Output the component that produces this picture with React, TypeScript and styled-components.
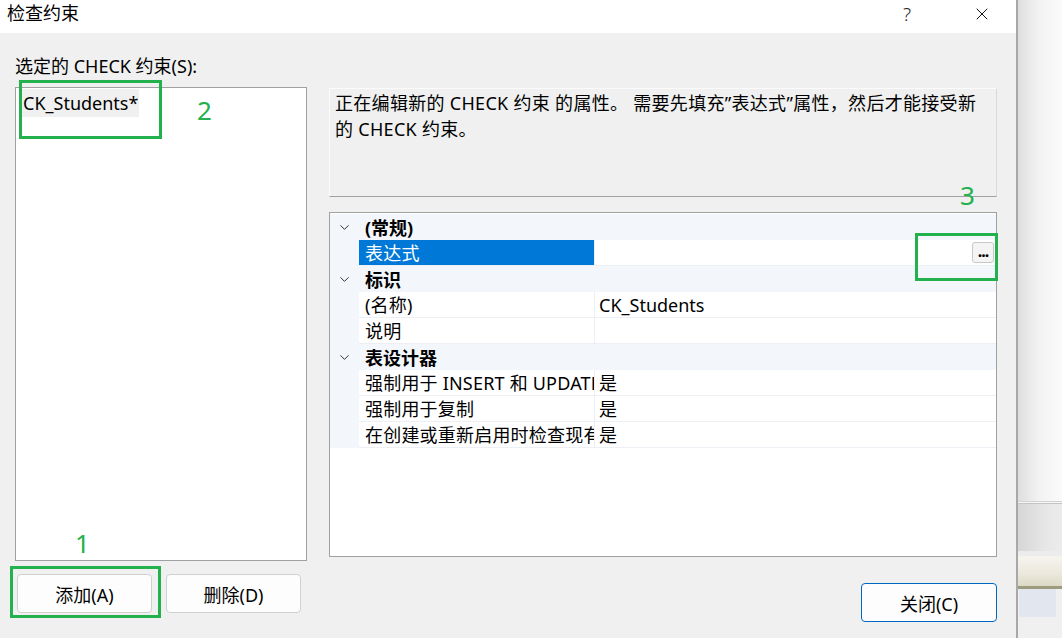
import React from "react"
import styled, { createGlobalStyle } from "styled-components"
import { ChevronDown, X } from "lucide-react"

const GlobalStyle = createGlobalStyle`
  html, body {
    margin: 0;
    padding: 0;
    background: #f0f0f0;
  }
  body {
    font-family: "Noto Sans", "Noto Sans CJK SC", sans-serif;
    color: #000;
  }
`

const Screen = styled.div`
  position: relative;
  display: flex;
  width: 1062px;
  height: 638px;
  overflow: hidden;
  font-size: 18px;
`

const Dialog = styled.div`
  width: 1016px;
  display: flex;
  flex-direction: column;
  background: #f0f0f0;
  border-right: 2px solid #a8a8a8;
`

const TitleBar = styled.div`
  height: 33px;
  display: flex;
  align-items: center;
  background: #ffffff;
  padding-left: 7px;
`

const Title = styled.div`
  font-size: 18px;
  line-height: 24px;
  margin-top: -8px;
`

const TitleButtons = styled.div`
  margin-left: auto;
  display: flex;
  align-items: center;
  margin-top: -6px;
`

const HelpButton = styled.div`
  width: 14px;
  font-size: 19px;
  font-weight: 300;
  color: #222;
  line-height: 24px;
  margin-right: 55px;
`

const CloseIcon = styled.div`
  display: flex;
  margin-right: 24px;
  color: #111;
`

const Body = styled.div`
  flex: 1;
  display: flex;
  gap: 22px;
  padding: 0 19px 0 15px;
`

const LeftCol = styled.div`
  width: 292px;
  display: flex;
  flex-direction: column;
  padding-top: 22px;
`

const FieldLabel = styled.div`
  line-height: 24px;
  height: 24px;
  margin-top: -1px;
  margin-bottom: 1px;
`

const ListBox = styled.div`
  margin-top: 8px;
  height: 474px;
  box-sizing: border-box;
  background: #ffffff;
  border: 1px solid #a0a0a0;
  padding: 0 6px;
`

const ListItem = styled.div`
  display: inline-block;
  margin-top: 1px;
  padding: 0 1px;
  height: 28px;
  line-height: 28px;
  background: ${p => (p.$selected ? "#f0f0f0" : "transparent")};
`

const ButtonRow = styled.div`
  display: flex;
  gap: 14px;
  margin-top: 13px;
  padding-left: 2px;
`

const Button = styled.div`
  width: ${p => p.$w || 135}px;
  height: 39px;
  box-sizing: border-box;
  display: flex;
  align-items: center;
  justify-content: center;
  background: #fdfdfd;
  border: 1px solid ${p => (p.$primary ? "#0067c0" : "#d0d0d0")};
  border-radius: 4px;
  font-size: 18px;
`

const RightCol = styled.div`
  width: 668px;
  display: flex;
  flex-direction: column;
  padding-top: 55px;
`

const Description = styled.div`
  height: 109px;
  box-sizing: border-box;
  border: 1px solid;
  border-color: #fbfbfb #dadada #a0a0a0 #fbfbfb;
  padding: 1px 5px;
  line-height: 26px;
  white-space: nowrap;
  letter-spacing: 0.3px;
`

const PropGrid = styled.div`
  margin-top: 15px;
  height: 345px;
  box-sizing: border-box;
  border: 1px solid #a0a0a0;
  background: #ffffff;
  padding-top: 1px;
  display: flex;
  flex-direction: column;
`

const Row = styled.div`
  display: flex;
  height: 26px;
  box-sizing: border-box;
  background: ${p => (p.$category ? "#f3f6fb" : "#ffffff")};
`

const Gutter = styled.div`
  width: 29px;
  flex: none;
  display: flex;
  align-items: center;
  justify-content: center;
  background: #f3f6fb;
  color: #333;
`

const CategoryText = styled.div`
  font-weight: 700;
  line-height: 24px;
  padding: 2px 0 0 6px;
`

const NameCell = styled.div`
  width: 236px;
  flex: none;
  box-sizing: border-box;
  padding: 2px 0 0 6px;
  line-height: 23px;
  white-space: nowrap;
  overflow: hidden;
  letter-spacing: 0.2px;
  border-right: 1px solid #eceff4;
  border-bottom: 1px solid #eceff4;
  background: ${p => (p.$selected ? "#0078d7" : "#ffffff")};
  color: ${p => (p.$selected ? "#ffffff" : "#000")};
`

const ValueCell = styled.div`
  flex: 1;
  display: flex;
  align-items: center;
  padding: 2px 0 0 4px;
  line-height: 23px;
  border-bottom: 1px solid #eceff4;
`

const EllipsisButton = styled.div`
  margin-left: auto;
  margin-right: 2px;
  margin-top: -2px;
  width: 22px;
  height: 21px;
  box-sizing: border-box;
  border: 1px solid #c8c8c8;
  border-radius: 3px;
  background: #f4f4f4;
  font-size: 16px;
  font-weight: 700;
  line-height: 16px;
  text-align: center;
  letter-spacing: -1px;
`

const Footer = styled.div`
  display: flex;
  justify-content: flex-end;
  margin-top: 26px;
`

const SideStrip = styled.div`
  flex: 1;
  display: flex;
  flex-direction: column;
`

const Band = styled.div`
  height: ${p => p.$h}px;
  flex: ${p => (p.$grow ? 1 : "none")};
  background: ${p => p.$bg};
`

const BlueTab = styled.div`
  height: 28px;
  display: flex;
  background: #f0f0f0;
  & > div {
    width: 37px;
    background: #e2e6ee;
    margin-left: 1px;
  }
`

const Mark = styled.div`
  position: absolute;
  box-sizing: border-box;
  border: 3px solid #22b14c;
  left: ${p => p.$x}px;
  top: ${p => p.$y}px;
  width: ${p => p.$w}px;
  height: ${p => p.$h}px;
`

const MarkNumber = styled.div`
  position: absolute;
  left: ${p => p.$x}px;
  top: ${p => p.$y}px;
  color: #22b14c;
  font-family: "Noto Sans", sans-serif;
  font-size: 26px;
  line-height: 30px;
`

const categories = [
  {
    title: "(常规)",
    rows: [{ name: "表达式", value: "", selected: true, ellipsis: true }],
  },
  {
    title: "标识",
    rows: [
      { name: "(名称)", value: "CK_Students" },
      { name: "说明", value: "" },
    ],
  },
  {
    title: "表设计器",
    rows: [
      { name: "强制用于 INSERT 和 UPDATE", value: "是" },
      { name: "强制用于复制", value: "是" },
      { name: "在创建或重新启用时检查现有数据", value: "是" },
    ],
  },
]

const App = () => {
  return (
    <Screen>
      <GlobalStyle />
      <Dialog>
        <TitleBar>
          <Title>检查约束</Title>
          <TitleButtons>
            <HelpButton>?</HelpButton>
            <CloseIcon>
              <X size={20} strokeWidth={1.2} />
            </CloseIcon>
          </TitleButtons>
        </TitleBar>
        <Body>
          <LeftCol>
            <FieldLabel>选定的 CHECK 约束(S):</FieldLabel>
            <ListBox>
              <ListItem $selected>CK_Students*</ListItem>
            </ListBox>
            <ButtonRow>
              <Button>添加(A)</Button>
              <Button>删除(D)</Button>
            </ButtonRow>
          </LeftCol>
          <RightCol>
            <Description>
              正在编辑新的 CHECK 约束 的属性。 需要先填充”表达式”属性，然后才能接受新
              <br />
              的 CHECK 约束。
            </Description>
            <PropGrid>
              {categories.map(cat => (
                <React.Fragment key={cat.title}>
                  <Row $category>
                    <Gutter>
                      <ChevronDown size={15} strokeWidth={1.6} />
                    </Gutter>
                    <CategoryText>{cat.title}</CategoryText>
                  </Row>
                  {cat.rows.map(r => (
                    <Row key={r.name}>
                      <Gutter />
                      <NameCell $selected={r.selected}>{r.name}</NameCell>
                      <ValueCell>
                        {r.value}
                        {r.ellipsis && <EllipsisButton>...</EllipsisButton>}
                      </ValueCell>
                    </Row>
                  ))}
                </React.Fragment>
              ))}
            </PropGrid>
            <Footer>
              <Button $primary $w={136}>关闭(C)</Button>
            </Footer>
          </RightCol>
        </Body>
      </Dialog>
      <SideStrip>
        <Band $grow $bg="linear-gradient(90deg, #dedede 0%, #f2f2f2 45%, #fbfbfb 100%)" />
        <Band $h={1} $bg="#d2d2d2" />
        <Band $h={1} $bg="#f6f6f6" />
        <Band $h={1} $bg="#c4c4c4" />
        <Band $h={47} $bg="linear-gradient(90deg, #d6d6d6 0%, #e6e6e6 60%, #ececec 100%)" />
        <Band $h={5} $bg="#ececec" />
        <Band $h={30} $bg="linear-gradient(180deg, #f6f4ee 0%, #ebe8dc 60%, #dcd9c6 100%)" />
        <Band $h={3} $bg="#9c9b7e" />
        <BlueTab>
          <div />
        </BlueTab>
        <Band $h={21} $bg="#f0f0f0" />
      </SideStrip>

      <Mark $x={19} $y={80} $w={143} $h={59} />
      <MarkNumber $x={197} $y={95}>2</MarkNumber>
      <Mark $x={10} $y={566} $w={151} $h={52} />
      <MarkNumber $x={75} $y={528}>1</MarkNumber>
      <Mark $x={915} $y={233} $w={83} $h={48} />
      <MarkNumber $x={960} $y={180}>3</MarkNumber>
    </Screen>
  )
}

export default App
